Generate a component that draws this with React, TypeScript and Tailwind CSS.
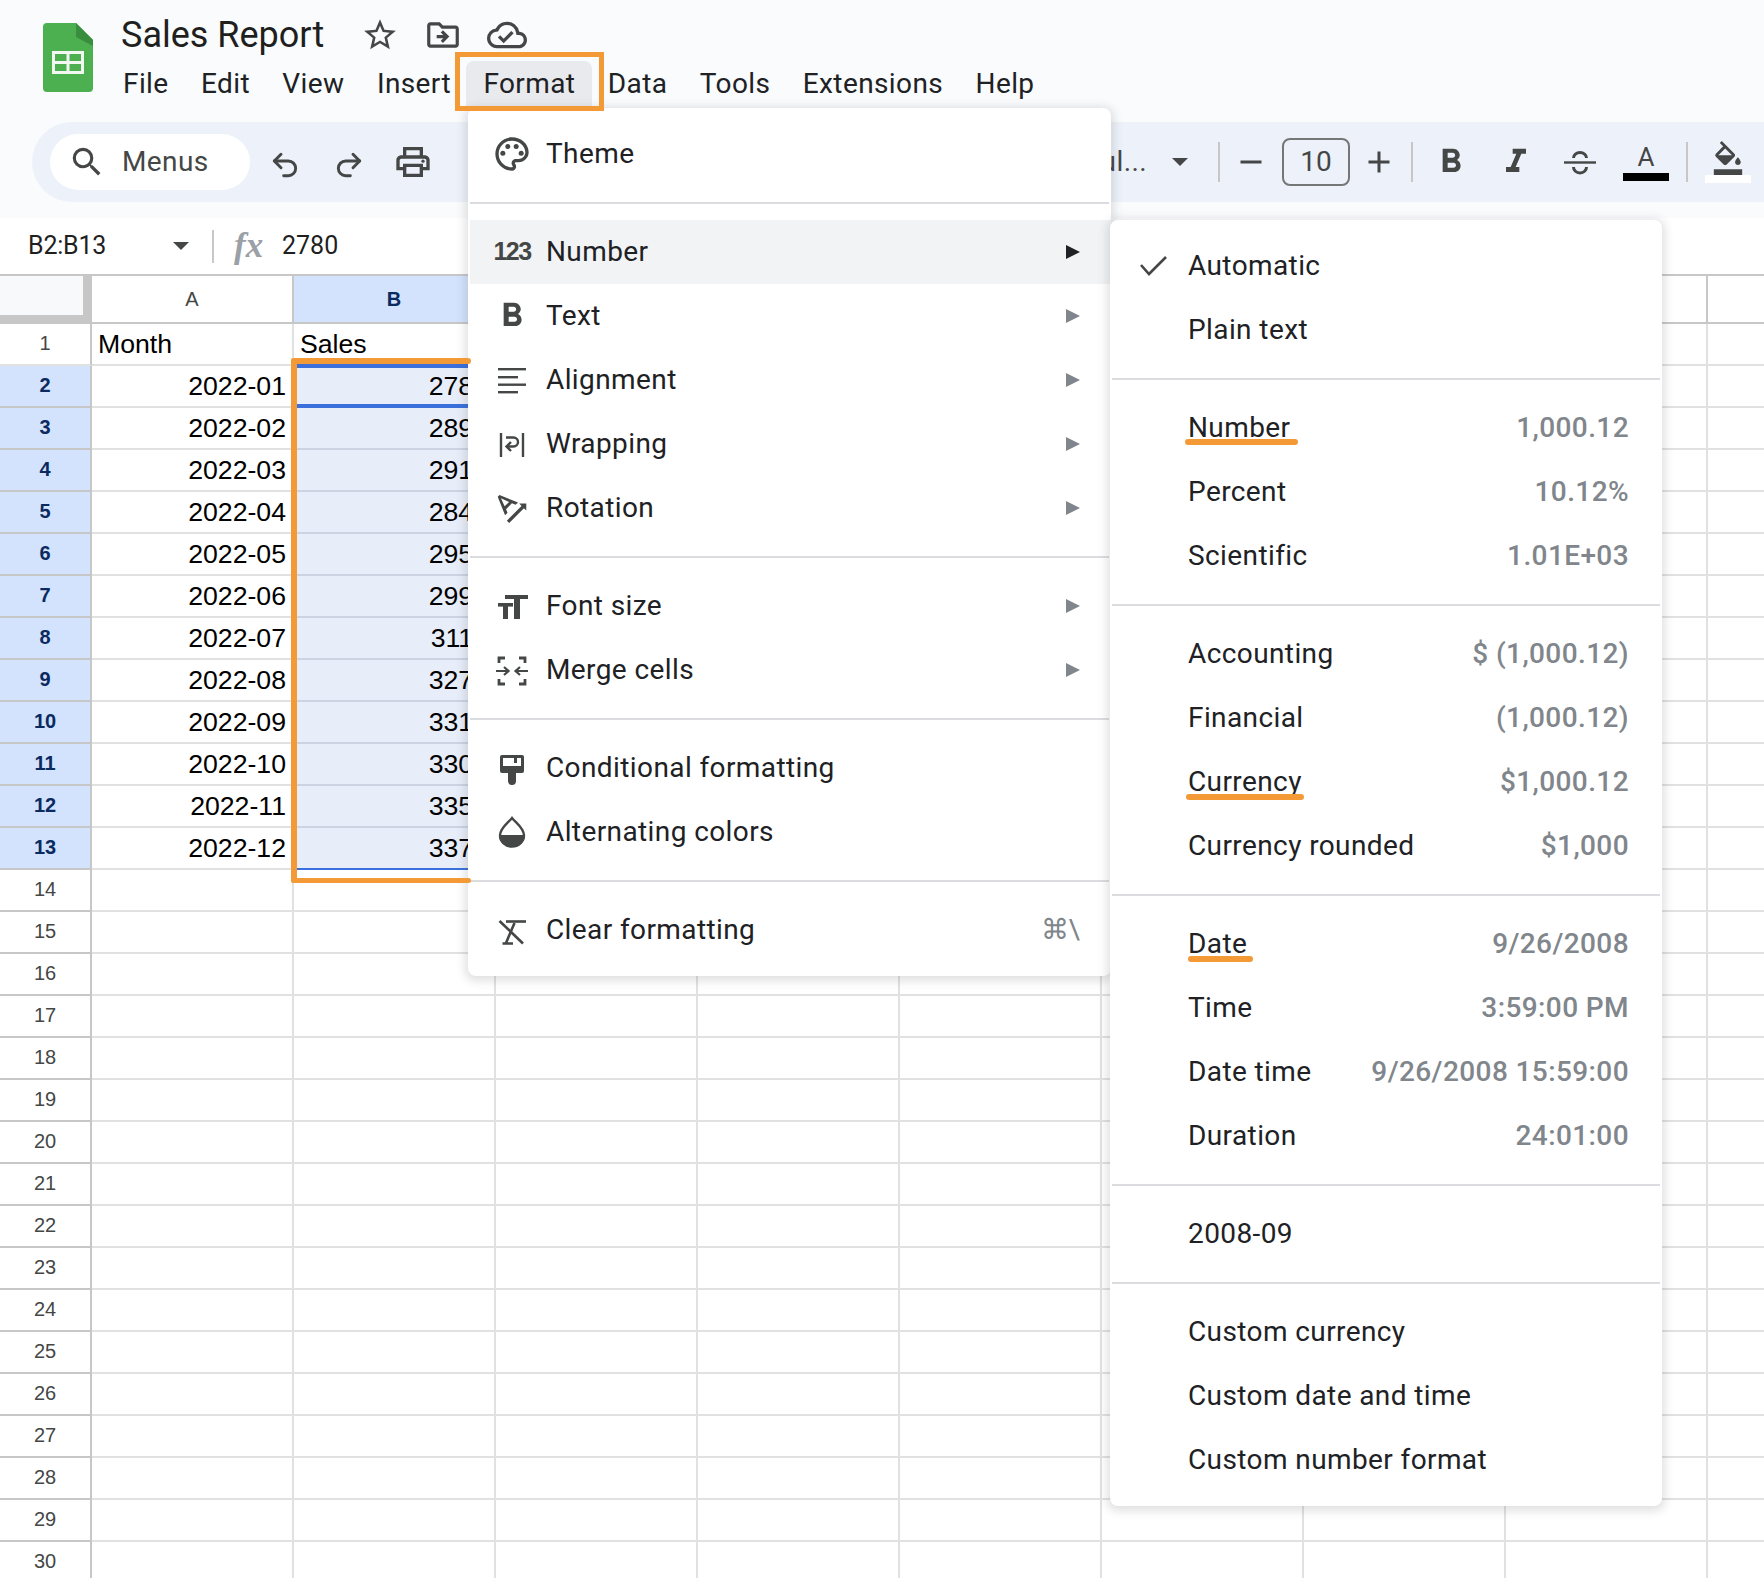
import React from 'react';
import { Undo2, Redo2 } from 'lucide-react';
import {
  MdStarBorder,
  MdOutlineDriveFileMove,
  MdOutlineCloudDone,
  MdSearch,
  MdOutlineLocalPrintshop,
  MdOutlinePalette,
  MdFormatBold,
  MdTextRotationAngleup,
  MdRemove,
  MdAdd,
  MdFormatItalic,
  MdOutlineFormatColorFill,
} from 'react-icons/md';

const MENUS = ['File', 'Edit', 'View', 'Insert', 'Format', 'Data', 'Tools', 'Extensions', 'Help'];
const MONTHS = ['2022-01', '2022-02', '2022-03', '2022-04', '2022-05', '2022-06', '2022-07', '2022-08', '2022-09', '2022-10', '2022-11', '2022-12'];
const SALES = ['2780', '2890', '2910', '2840', '2950', '2990', '3110', '3270', '3310', '3300', '3350', '3370'];
const ROWS = Array.from({ length: 30 }, (_, i) => i + 1);
const EMPTY_COLS = [2, 3, 4, 5, 6, 7, 8];

const SheetsLogo = () => (
  <svg width="50" height="69" viewBox="0 0 50 69">
    <path d="M4 0 H33 L50 17 V65 a4 4 0 0 1 -4 4 H4 a4 4 0 0 1 -4 -4 V4 a4 4 0 0 1 4 -4 Z" fill="#4caf50" />
    <path d="M33 0 L50 17 V23 L33 14 Z" fill="#388e3c" />
    <path d="M9 28 H41 V51 H9 Z M12 31 V38 H23.5 V31 Z M26.5 31 V38 H38 V31 Z M12 41 V48 H23.5 V41 Z M26.5 41 V48 H38 V41 Z" fill="#f1f8f1" fillRule="evenodd" />
  </svg>
);

const AlignIcon = () => (
  <svg width="40" height="40" viewBox="0 0 40 40" fill="#444746">
    <rect x="6" y="8" width="28" height="2.4" />
    <rect x="6" y="16" width="20" height="2.4" />
    <rect x="6" y="23.5" width="28" height="2.4" />
    <rect x="6" y="31" width="20" height="2.4" />
  </svg>
);

const WrapIcon = () => (
  <svg width="40" height="40" viewBox="0 0 40 40" fill="none" stroke="#444746" strokeWidth="2.4">
    <path d="M9 9 V33 M31 9 V33" />
    <path d="M14 13.5 H21.5 a4.5 4.5 0 0 1 0 9 H15" />
    <path d="M19 18 L14.5 22.5 L19 27" />
  </svg>
);

const FontSizeIcon = () => (
  <svg width="40" height="40" viewBox="0 0 40 40" fill="#444746">
    <rect x="13" y="9" width="23" height="4" />
    <rect x="22" y="9" width="6" height="24" />
    <rect x="6" y="17" width="15" height="3.6" />
    <rect x="11" y="17" width="5" height="16" />
  </svg>
);

const MergeIcon = () => (
  <svg width="40" height="40" viewBox="0 0 40 40" fill="none" stroke="#444746" strokeWidth="2.8">
    <path d="M13 8 H7 V13 M27 8 H33 V13 M13 34 H7 V29 M27 34 H33 V29" />
    <path d="M4 21 H16 M12 17 L16.5 21 L12 25" strokeWidth="2.2" />
    <path d="M36 21 H24 M28 17 L23.5 21 L28 25" strokeWidth="2.2" />
  </svg>
);

const BrushIcon = () => (
  <svg width="40" height="40" viewBox="0 0 40 40">
    <path d="M10 7 H30 a2 2 0 0 1 2 2 V23 a2 2 0 0 1 -2 2 H24 V33 a3.5 3.5 0 0 1 -8 0 V25 H10 a2 2 0 0 1 -2 -2 V9 a2 2 0 0 1 2 -2 Z" fill="#444746" />
    <path d="M11 10 H22 V15 H25 V10 H29 V18 H11 Z" fill="#fff" />
  </svg>
);

const DropIcon = () => (
  <svg width="40" height="40" viewBox="0 0 40 40">
    <path d="M20 6 C16 11 8 16 8 23.5 a12 11 0 0 0 24 0 C32 16 24 11 20 6 Z" fill="none" stroke="#444746" strokeWidth="2.4" />
    <path d="M7 23 H33 a13 12 0 0 1 -26 0 Z" fill="#444746" />
  </svg>
);

const ClearIcon = () => (
  <svg width="40" height="40" viewBox="0 0 40 40" fill="none" stroke="#444746" strokeWidth="2.6">
    <path d="M7.5 11 L31 33.5" />
    <path d="M14 11.5 H34" />
    <path d="M22.5 13 L14 33 M10.5 33.5 H21" />
  </svg>
);

const StrikeIcon = () => (
  <svg width="40" height="40" viewBox="0 0 40 40" fill="none" stroke="#444746" strokeWidth="3">
    <path d="M4 20.5 H36" strokeWidth="2.4" />
    <path d="M13.5 16 a6.5 5.5 0 0 1 13 0" />
    <path d="M13.5 25 a6.5 6 0 0 0 13 0" />
  </svg>
);

const Caret = () => (
  <svg width="16" height="8" viewBox="0 0 16 8" fill="#444746">
    <path d="M0 0 H16 L8 8 Z" />
  </svg>
);

type FormatItem = { label: string; icon: React.ReactNode; arrow?: boolean; active?: boolean; hint?: string };

const FORMAT_GROUPS: FormatItem[][] = [
  [{ label: 'Theme', icon: <MdOutlinePalette size={40} color="#444746" /> }],
  [
    { label: 'Number', active: true, arrow: true, icon: <span className="font-['Liberation_Sans',sans-serif] text-[25px] font-bold tracking-[-1.5px] text-[#444746]">123</span> },
    { label: 'Text', arrow: true, icon: <MdFormatBold size={42} color="#444746" /> },
    { label: 'Alignment', arrow: true, icon: <AlignIcon /> },
    { label: 'Wrapping', arrow: true, icon: <WrapIcon /> },
    { label: 'Rotation', arrow: true, icon: <MdTextRotationAngleup size={40} color="#444746" /> },
  ],
  [
    { label: 'Font size', arrow: true, icon: <FontSizeIcon /> },
    { label: 'Merge cells', arrow: true, icon: <MergeIcon /> },
  ],
  [
    { label: 'Conditional formatting', icon: <BrushIcon /> },
    { label: 'Alternating colors', icon: <DropIcon /> },
  ],
  [{ label: 'Clear formatting', icon: <ClearIcon />, hint: '⌘\\' }],
];

type NumberItem = { label: string; sample?: string; checked?: boolean };

const NUMBER_GROUPS: NumberItem[][] = [
  [{ label: 'Automatic', checked: true }, { label: 'Plain text' }],
  [
    { label: 'Number', sample: '1,000.12' },
    { label: 'Percent', sample: '10.12%' },
    { label: 'Scientific', sample: '1.01E+03' },
  ],
  [
    { label: 'Accounting', sample: '$ (1,000.12)' },
    { label: 'Financial', sample: '(1,000.12)' },
    { label: 'Currency', sample: '$1,000.12' },
    { label: 'Currency rounded', sample: '$1,000' },
  ],
  [
    { label: 'Date', sample: '9/26/2008' },
    { label: 'Time', sample: '3:59:00 PM' },
    { label: 'Date time', sample: '9/26/2008 15:59:00' },
    { label: 'Duration', sample: '24:01:00' },
  ],
  [{ label: '2008-09' }],
  [{ label: 'Custom currency' }, { label: 'Custom date and time' }, { label: 'Custom number format' }],
];

const Divider = () => (
  <div className="py-[16px] pl-[2px] pr-[2px]">
    <div className="h-[2px] bg-[#dadce0]" />
  </div>
);

const FormatMenu = () => (
  <div className="absolute left-[468px] top-[108px] z-20 w-[643px] rounded-[8px] bg-white pb-[14px] pt-[14px] shadow-[0_2px_10px_3px_rgba(60,64,67,0.16)]">
    {FORMAT_GROUPS.map((group, i) => (
      <React.Fragment key={i}>
        {i > 0 && <Divider />}
        {group.map((item) => (
          <div
            key={item.label}
            className={`ml-[2px] flex h-[64px] items-center pl-[22px] pr-[31px] ${item.active ? 'bg-[#f1f3f4]' : ''}`}
          >
            <div className="flex w-[40px] items-center justify-center">{item.icon}</div>
            <span className="ml-[14px] flex-1 tracking-[0.4px] text-[#202124]">{item.label}</span>
            {item.arrow && (
              <svg width="14" height="14" viewBox="0 0 14 14" fill={item.active ? '#202124' : '#80868b'}>
                <path d="M0 0 L14 7 L0 14 Z" />
              </svg>
            )}
            {item.hint && <span className="text-[#80868b]">{item.hint}</span>}
          </div>
        ))}
      </React.Fragment>
    ))}
  </div>
);

const NumberMenu = () => (
  <div className="absolute left-[1110px] top-[220px] z-30 w-[552px] rounded-[8px] bg-white pb-[14px] pt-[14px] shadow-[0_2px_10px_3px_rgba(60,64,67,0.16)]">
    {NUMBER_GROUPS.map((group, i) => (
      <React.Fragment key={i}>
        {i > 0 && <Divider />}
        {group.map((item) => (
          <div key={item.label} className="flex h-[64px] items-center pl-[30px] pr-[33px]">
            <div className="flex w-[30px] items-center">
              {item.checked && (
                <svg width="27" height="22" viewBox="0 0 27 22" fill="none" stroke="#444746" strokeWidth="2.6">
                  <path d="M1 10 L9 19 L26 2" />
                </svg>
              )}
            </div>
            <span className="ml-[18px] flex-1 tracking-[0.4px] text-[#202124]">{item.label}</span>
            {item.sample && <span className="font-medium tracking-[0.4px] text-[#80868b]">{item.sample}</span>}
          </div>
        ))}
      </React.Fragment>
    ))}
  </div>
);

const Header = () => (
  <div className="flex h-[122px] bg-[#f9fbfd] pl-[43px] pt-[23px]">
    <SheetsLogo />
    <div className="ml-[30px] flex flex-col">
      <div className="-ml-[2px] -mt-[10px] flex h-[44px] items-center">
        <span className="text-[36px] leading-[44px] text-[#1f1f1f]">Sales Report</span>
        <div className="ml-[37px] flex items-center gap-[25px] text-[#444746]">
          <MdStarBorder size={38} />
          <MdOutlineDriveFileMove size={38} />
          <MdOutlineCloudDone size={40} />
        </div>
      </div>
      <div className="mt-[10px] flex gap-[32.4px] text-[#202124]">
        {MENUS.map((name) => (
          <span
            key={name}
            className={`leading-[34px] tracking-[0.4px] ${name === 'Format' ? 'relative z-[5] -mx-[17px] -my-[6px] rounded-t-[8px] bg-[#e8eaed] px-[17px] py-[6px]' : ''}`}
          >
            {name}
          </span>
        ))}
      </div>
    </div>
  </div>
);

const VSep = () => <div className="h-[40px] w-[2px] bg-[#c7c7c7]" />;

const Toolbar = () => (
  <div className="bg-[#f9fbfd] pb-[16px] pl-[32px]">
    <div className="flex h-[80px] items-center rounded-l-[40px] bg-[#edf2fa] pl-[18px] text-[#444746]">
      <div className="flex h-[56px] w-[200px] items-center rounded-[28px] bg-white pl-[18px]">
        <MdSearch size={38} />
        <span className="ml-[16px] tracking-[0.4px]">Menus</span>
      </div>
      <Undo2 size={32} strokeWidth={2.2} className="ml-[19px] mt-[6px]" />
      <Redo2 size={32} strokeWidth={2.2} className="ml-[32px] mt-[6px]" />
      <MdOutlineLocalPrintshop size={40} className="ml-[28px]" />
      <div className="ml-auto flex items-center">
        <span className="tracking-[0.4px]">Defaul...</span>
        <div className="ml-[25px]">
          <Caret />
        </div>
        <div className="ml-[30px]">
          <VSep />
        </div>
        <MdRemove size={36} className="ml-[13px]" />
        <div className="ml-[13px] flex h-[48px] w-[68px] items-center justify-center rounded-[8px] border-2 border-[#747775] text-[#444746]">10</div>
        <MdAdd size={36} className="ml-[11px]" />
        <div className="ml-[14px]">
          <VSep />
        </div>
        <MdFormatBold size={40} className="ml-[18px]" />
        <MdFormatItalic size={40} className="ml-[25px]" />
        <div className="ml-[24px]">
          <StrikeIcon />
        </div>
        <div className="ml-[23px] flex w-[46px] flex-col items-center">
          <span className="text-[26px] leading-[28px]">A</span>
          <div className="mt-[2px] h-[8px] w-[46px] bg-black" />
        </div>
        <div className="ml-[17px]">
          <VSep />
        </div>
        <div className="ml-[17px] mr-[13px] flex w-[46px] flex-col items-center">
          <MdOutlineFormatColorFill size={34} />
          <div className="h-[8px] w-[46px] bg-white" />
        </div>
      </div>
    </div>
  </div>
);

const FormulaBar = () => (
  <div className="flex h-[56px] items-center bg-white pl-[28px]">
    <span className="w-[145px] text-[25px] tracking-[-0.2px] text-[#1f1f1f]">B2:B13</span>
    <Caret />
    <div className="ml-[23px] h-[33px] w-[2px] bg-[#c7c7c7]" />
    <span className="ml-[20px] w-[48px] font-['Liberation_Serif',serif] text-[35px] font-bold italic text-[#9aa0a6]">fx</span>
    <span className="text-[25px] text-[#1f1f1f]">2780</span>
  </div>
);

const ColHeader = ({ label, selected }: { label: string; selected?: boolean }) => (
  <div
    className={`flex h-full w-[202px] shrink-0 items-center justify-center border-r-2 border-[#c7c7c7] text-[20px] ${
      selected ? 'bg-[#d3e3fd] font-bold text-[#0b2a5f]' : 'text-[#444746]'
    }`}
  >
    {label}
  </div>
);

const Row = ({ n }: { n: number }) => {
  const selected = n >= 2 && n <= 13;
  const cellBase = 'flex h-full w-[202px] shrink-0 items-center border-b-2 border-r-2 px-[6px] text-[26.67px] text-black';
  return (
    <div className="flex h-[42px]">
      <div
        className={`flex h-full w-[92px] shrink-0 items-center justify-center border-b-2 border-r-2 border-r-[#c7c7c7] pb-[2px] text-[20px] ${
          selected ? 'border-b-[#c7c7c7] bg-[#d3e3fd] font-bold text-[#0b2a5f]' : n === 1 ? 'border-b-[#e1e1e1] text-[#444746]' : 'border-b-[#c7c7c7] text-[#444746]'
        }`}
      >
        {n}
      </div>
      <div className={`${cellBase} border-[#e1e1e1] ${selected ? 'justify-end' : ''}`}>{n === 1 ? 'Month' : MONTHS[n - 2]}</div>
      <div className={`${cellBase} ${selected ? 'justify-end border-[#ccd3e2] bg-[#e7edf9]' : 'border-[#e1e1e1]'}`}>{n === 1 ? 'Sales' : SALES[n - 2]}</div>
      {EMPTY_COLS.map((c) => (
        <div key={c} className={`${cellBase} border-[#e1e1e1]`} />
      ))}
      <div className="h-full flex-1 border-b-2 border-[#e1e1e1]" />
    </div>
  );
};

const Grid = () => (
  <div>
    <div className="flex h-[50px] border-y-2 border-[#c7c7c7]">
      <div className="h-full w-[92px] shrink-0 bg-[#c7c7c7]">
        <div className="h-[39px] w-[83px] bg-[#f8f9fa]" />
      </div>
      <ColHeader label="A" />
      <ColHeader label="B" selected />
      {['C', 'D', 'E', 'F', 'G', 'H', 'I'].map((c) => (
        <ColHeader key={c} label={c} />
      ))}
    </div>
    {ROWS.map((n) => (
      <Row key={n} n={n} />
    ))}
  </div>
);

const Annotations = () => (
  <>
    {/* active cell + selection edges */}
    <div className="absolute left-[297px] top-[364px] z-10 h-[44px] w-[172px] border-y-4 border-[#3b6fdb]" />
    <div className="absolute left-[297px] top-[868px] z-10 h-[2px] w-[172px] bg-[#3b6fdb]" />
    {/* orange marks */}
    <div className="absolute left-[455px] top-[52px] z-40 h-[59px] w-[149px] border-[5px] border-[#f39a37]" />
    <div className="absolute left-[291px] top-[358px] z-40 h-[6px] w-[180px] rounded-full bg-[#f39a37]" />
    <div className="absolute left-[291px] top-[358px] z-40 h-[525px] w-[6px] rounded-full bg-[#f39a37]" />
    <div className="absolute left-[291px] top-[878px] z-40 h-[5px] w-[180px] rounded-full bg-[#f39a37]" />
    <div className="absolute left-[1185px] top-[439px] z-40 h-[6px] w-[113px] rounded-full bg-[#f39a37]" />
    <div className="absolute left-[1186px] top-[794px] z-40 h-[6px] w-[118px] rounded-full bg-[#f39a37]" />
    <div className="absolute left-[1188px] top-[956px] z-40 h-[6px] w-[65px] rounded-full bg-[#f39a37]" />
  </>
);

export default function App() {
  return (
    <div className="relative h-[1578px] w-[1764px] overflow-hidden bg-white font-['Roboto',sans-serif] text-[28px]">
      <Header />
      <Toolbar />
      <FormulaBar />
      <div className="font-['Liberation_Sans',sans-serif]">
        <Grid />
      </div>
      <FormatMenu />
      <NumberMenu />
      <Annotations />
    </div>
  );
}
